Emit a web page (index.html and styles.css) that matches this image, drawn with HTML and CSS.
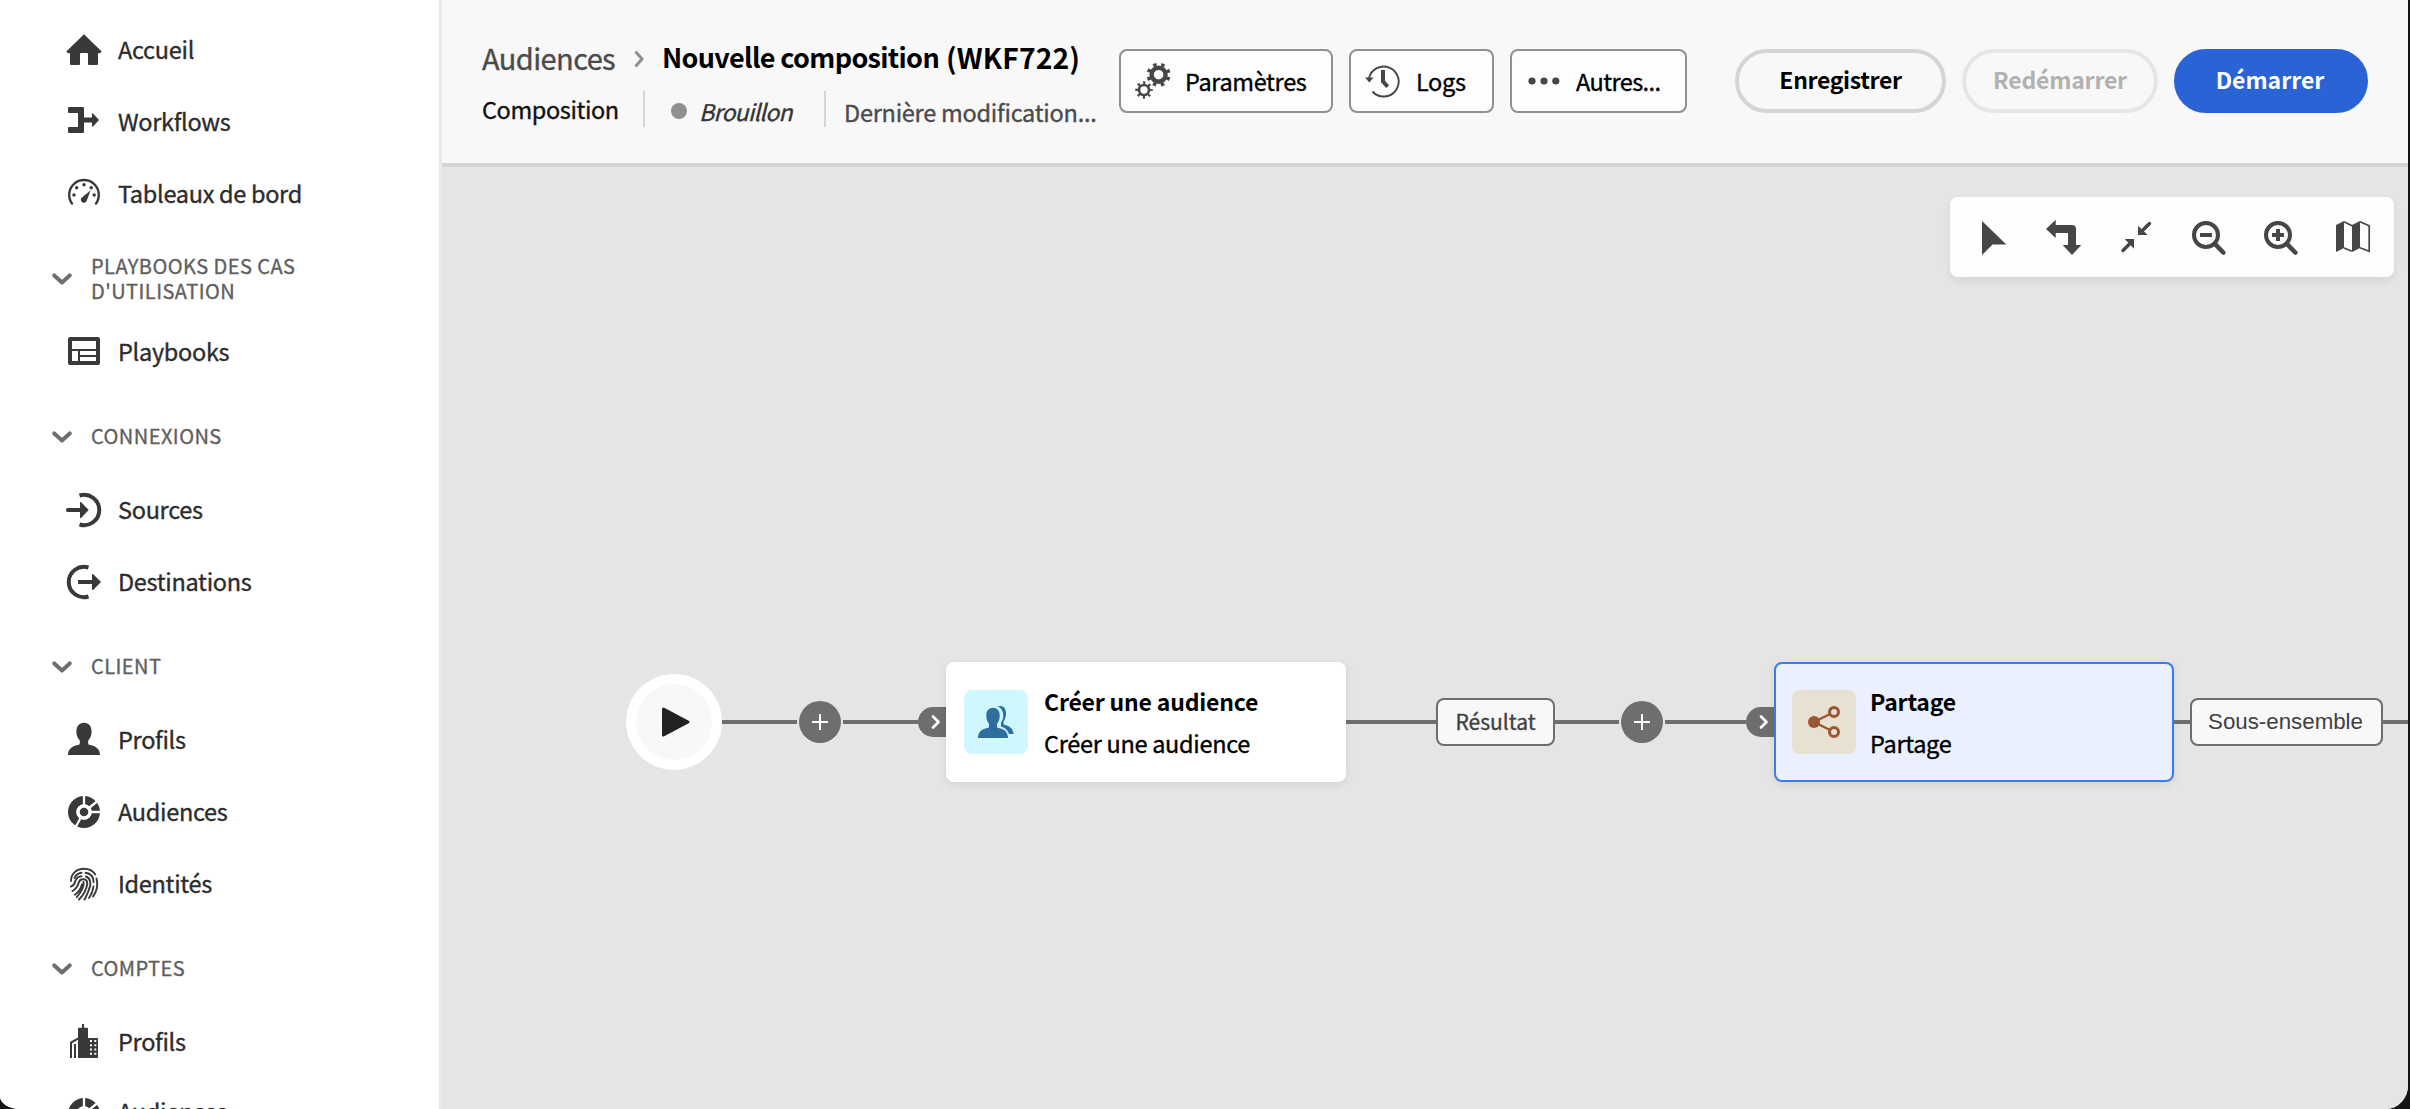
FILE: index.html
```html
<!DOCTYPE html>
<html lang="fr">
<head>
<meta charset="utf-8">
<title>Nouvelle composition</title>
<link rel="stylesheet" href="styles.css">
</head>
<body>
<svg class="defs" aria-hidden="true">
  <symbol id="chevron" viewBox="0 0 20 12"><path d="M2.3 2.4 10 9.4 17.700 2.400" fill="none" stroke="currentColor" stroke-width="4" stroke-linecap="round" stroke-linejoin="round"/></symbol>
  <symbol id="audience" viewBox="0 0 36 36">
    <circle cx="18" cy="18" r="11.900" fill="none" stroke="currentColor" stroke-width="8.200"/>
    <path d="M18 18V0M18 18 34 5M18 18H36M18 18 8.500 35" stroke="#fff" stroke-width="2.300"/>
    <circle cx="18" cy="18" r="7.500" fill="#fff"/>
    <circle cx="18" cy="18" r="4.300" fill="currentColor"/>
  </symbol>
</svg>
<div class="app">
  <nav class="sidebar">
    <a class="item"><svg class="icon" viewBox="0 0 36 36"><path d="M18 2.300 35.700 19.500 34 21.200H32V32q0 1-1 1H23q-1 0-1-1V22q0-1-1-1H15q-1 0-1 1V32q0 1-1 1H5q-1 0-1-1V21.200H2L.3 19.500Z"/></svg><span>Accueil</span></a>
    <a class="item"><svg class="icon" viewBox="0 0 36 36"><path d="M3 3H17q1 0 1 1V13.500H26V10q0-1 1-.5L33 16 27 22.500Q26 23 26 22V18.500H18V28q0 1-1 1H3q-1 0-1-1V24q0-1 1-1H12V9H3Q2 9 2 8V4q0-1 1-1Z"/></svg><span>Workflows</span></a>
    <a class="item"><svg class="icon" viewBox="0 0 36 36"><path d="M6 27.500A14.800 14.800 0 1 1 30 27.500" fill="none" stroke="currentColor" stroke-width="2.400" stroke-linecap="round"/><path d="M24.600 14.200 20.800 24.600A3 3 0 1 1 16 21.500Z"/><circle cx="8" cy="19" r="1.700"/><circle cx="10.700" cy="11.700" r="1.700"/><circle cx="18" cy="8.700" r="1.700"/><circle cx="25.200" cy="11.700" r="1.700"/><circle cx="28.200" cy="19" r="1.700"/></svg><span>Tableaux de bord</span></a>

    <div class="section"><svg class="chev"><use href="#chevron"/></svg><span>PLAYBOOKS DES CAS<br>D'UTILISATION</span></div>
    <a class="item"><svg class="icon" viewBox="0 0 36 36"><g fill="none" stroke="currentColor"><rect x="4" y="5" width="28" height="24" stroke-width="4" stroke-linejoin="round"/><path d="M5 16H31M13 16V28M13 22H31" stroke-width="2"/></g></svg><span>Playbooks</span></a>

    <div class="section"><svg class="chev"><use href="#chevron"/></svg><span>CONNEXIONS</span></div>
    <a class="item"><svg class="icon" viewBox="0 0 36 36"><path d="M13.500 3.500A15.200 15.200 0 1 1 13.500 32.500" fill="none" stroke="currentColor" stroke-width="4"/><path d="M1.500 16H14V10.500q.5-1 1.300-.2L22.700 18l-7.400 7.700Q14.500 26.500 14 25.500V20H1.500Q0 20 0 18t1.500-2Z"/></svg><span>Sources</span></a>
    <a class="item"><svg class="icon" viewBox="0 0 36 36"><path d="M22.500 3.500A15.200 15.200 0 1 0 22.500 32.500" fill="none" stroke="currentColor" stroke-width="4"/><path d="M12 16H26V10.500q.5-1 1.300-.2L35 18l-7.700 7.700Q26.500 26.500 26 25.500V20H12Z"/></svg><span>Destinations</span></a>

    <div class="section"><svg class="chev"><use href="#chevron"/></svg><span>CLIENT</span></div>
    <a class="item"><svg class="icon" viewBox="0 0 36 36"><path d="M18 .8C23 .8 25.600 4.500 25.600 9.500 25.600 13.500 24.200 16.500 22.200 18.500V21.200C22.200 22.300 22.800 22.700 24 23 30.500 24.300 34 27.500 34 33H2C2 27.500 5.500 24.300 12 23 13.200 22.700 13.800 22.300 13.800 21.200V18.500C11.800 16.500 10.400 13.500 10.400 9.500 10.400 4.500 13 .8 18 .8Z"/></svg><span>Profils</span></a>
    <a class="item"><svg class="icon"><use href="#audience"/></svg><span>Audiences</span></a>
    <a class="item"><svg class="icon" viewBox="0 0 36 36"><g fill="none" stroke="currentColor" stroke-width="1.900" stroke-linecap="round"><path d="M5 15C5 7.500 10.500 2.800 18 2.800 23 2.800 27 5 29.300 8.500M30.500 12.500C32 18 31 25 27 30.500"/><path d="M8.500 12C9.500 9.500 12.500 7.300 15.500 6.800M19.500 6.800C24.500 7.500 27.500 11 27.600 16M27.500 20.500C27 25 25.500 28.500 23 32"/><path d="M5 20.500C8 19.500 8.800 17.500 9.300 15 10.300 12.200 13 10.300 15.500 10.200M20 10.500C25 12.500 25.300 18.500 23 23.500 21.800 27 20.500 30 18.500 33.500"/><path d="M6.500 25C11 22.500 12 19.500 12.800 16.500 14 11.800 21.600 12.200 21.300 17.800 20.500 23 18 28.500 13 33.500M8.800 28.800C13 25.800 15 22.500 16 18.500M17.500 16Q18.700 21.500 10.800 31.200"/></g></svg><span>Identités</span></a>

    <div class="section"><svg class="chev"><use href="#chevron"/></svg><span>COMPTES</span></div>
    <a class="item"><svg class="icon" viewBox="0 0 36 36"><path fill-rule="evenodd" d="M16 0H18V3.700H21q1 0 1 1V14H31q1 0 1 1V33q0 1-1 1H12V4.700q0-1 1-1H16ZM24 16V18H26V16ZM28.300 16V18H30.300V16ZM24 20.300V22.300H26V20.300ZM28.300 20.300V22.300H30.300V20.300ZM24 24.500V26.500H26V24.500ZM28.300 24.500V26.500H30.300V24.500ZM24 28.700V30.700H26V28.700ZM28.300 28.700V30.700H30.300V28.700ZM8 20H10V34H8Z"/><path d="M5 34V18.600L12 14.600" fill="none" stroke="currentColor" stroke-width="2"/></svg><span>Profils</span></a>
    <a class="item"><svg class="icon"><use href="#audience"/></svg><span>Audiences</span></a>
  </nav>

  <main class="main">
    <header class="header">
      <div class="titles">
        <div class="crumbs">
          <span class="crumb">Audiences</span>
          <svg class="crumb-sep" viewBox="0 0 12 20"><path d="M2.500 2.500 9 10 2.500 17.500"/></svg>
          <span class="crumb-current">Nouvelle composition</span>
          <span class="crumb-id">(WKF722)</span>
        </div>
        <div class="meta">
          <span class="kind">Composition</span>
          <span class="status"><i class="dot"></i><em>Brouillon</em></span>
          <span class="modified">Dernière modification...</span>
        </div>
      </div>
      <div class="actions">
        <button class="btn"><svg class="icon" viewBox="0 0 36 36"><g fill="none" stroke="currentColor"><circle cx="24.600" cy="11.700" r="7" stroke-width="4.400"/><circle cx="24.600" cy="11.700" r="10.300" stroke-width="3.400" stroke-dasharray="3.400 4.690" stroke-dashoffset="-2.300"/><circle cx="10" cy="27" r="5" stroke-width="2.600"/><circle cx="10" cy="27" r="7.200" stroke-width="3" stroke-dasharray="2.200 3.455" stroke-dashoffset="1.100"/></g></svg><span>Paramètres</span></button>
        <button class="btn"><svg class="icon" viewBox="0 0 36 36"><path d="M4 15.500A15 15 0 1 1 7.500 28.500" fill="none" stroke="currentColor" stroke-width="1.900"/><path d="M0 14.600H8.600L4.300 19.500Z"/><path d="M18 7V18.500L22.600 23.600" fill="none" stroke="currentColor" stroke-width="4"/></svg><span>Logs</span></button>
        <button class="btn"><svg class="icon" viewBox="0 0 36 36"><circle cx="6" cy="18" r="3.600"/><circle cx="18" cy="18" r="3.600"/><circle cx="29.800" cy="18" r="3.600"/></svg><span>Autres...</span></button>
      </div>
      <div class="cta">
        <button class="pill save">Enregistrer</button>
        <button class="pill restart" disabled>Redémarrer</button>
        <button class="pill start">Démarrer</button>
      </div>
    </header>

    <section class="canvas">
      <div class="tools">
        <svg class="icon" viewBox="0 0 36 36"><path d="M7 2 31.300 25.500H17.500L7 36Z"/></svg>
        <svg class="icon" viewBox="0 0 36 36"><path d="M-1 10 8.700.7V6H25q4 0 4 4V26H34.300L25 36 15.700 26H21V14H8.700V19Z"/></svg>
        <svg class="icon" viewBox="0 0 36 36"><path d="M30.500 4.500 22 13M4 31.500 12 23.500" fill="none" stroke="currentColor" stroke-width="3.400" stroke-linecap="round"/><path d="M19 6.700V16H28.700ZM15 29.800V20H5.700Z"/></svg>
        <svg class="icon" viewBox="0 0 36 36"><g fill="none" stroke="currentColor"><circle cx="15" cy="16" r="12" stroke-width="4"/><path d="M9 16H21" stroke-width="4"/><path d="M24 25 32.300 33.500" stroke-width="4.600" stroke-linecap="round"/></g></svg>
        <svg class="icon" viewBox="0 0 36 36"><g fill="none" stroke="currentColor"><circle cx="15" cy="16" r="12" stroke-width="4"/><path d="M9 16H21M15 10V22" stroke-width="4"/><path d="M24 25 32.300 33.500" stroke-width="4.600" stroke-linecap="round"/></g></svg>
        <svg class="icon" viewBox="0 0 36 36"><path d="M1 6 9 2V29L1 33ZM17 6 25 2V29L17 33Z"/><path d="M9 2.700 17 6.700M9 29 17 32.300M25 2.700 34.200 6.700V32.300L25 28.700" fill="none" stroke="currentColor" stroke-width="1.700"/></svg>
      </div>

      <div class="flow">
        <div class="start-node"><div><svg viewBox="0 0 30 32"><path d="M2.500 3 27 16 2.500 29Z"/></svg></div></div>
        <i class="line l1"></i>
        <div class="plus"></div>
        <i class="line l2"></i>
        <div class="port"><svg viewBox="0 0 10 16"><path d="M2 2.500 7.500 8 2 13.500"/></svg></div>
        <div class="card">
          <div class="tile people"><svg class="icon" viewBox="0 0 36 36"><path d="M15 3.700C19 3.700 21.700 6.500 21.700 11.500 21.700 15.500 20.500 18 19 19.700V22.500C19 23.500 19.500 23.800 20.500 24 27 25 30 28.500 30 34H0C0 28.500 3 25 9.500 24 10.500 23.800 11 23.500 11 22.500V19.700C9.500 18 8.300 15.500 8.300 11.500 8.300 6.500 11 3.700 15 3.700Z"/><path d="M19.500 2.500C25 .5 28.300 4.500 28 10 27.800 13.500 27 15.500 25.500 17.500V19.500C25.500 20.300 26 20.600 27 21 32.500 22.300 35.300 25.500 35.500 30H31C29.500 25.500 26.500 23.500 23 22.500V18.500C25 16 25.700 12.500 25 9 24.300 5.500 22.500 3.500 19.500 2.500Z"/></svg></div>
          <div class="card-text"><b>Créer une audience</b><span>Créer une audience</span></div>
        </div>
        <i class="line l3"></i>
        <div class="tag result">Résultat</div>
        <i class="line l4"></i>
        <div class="plus"></div>
        <i class="line l5"></i>
        <div class="port"><svg viewBox="0 0 10 16"><path d="M2 2.500 7.500 8 2 13.500"/></svg></div>
        <div class="card selected">
          <div class="tile share"><svg class="icon" viewBox="0 0 36 36"><path d="M8 18 28 8M8 18 28 28" fill="none" stroke="currentColor" stroke-width="2.200"/><circle cx="8" cy="18" r="6"/><circle cx="28" cy="8" r="4.500" fill="#e8e0d0" stroke="currentColor" stroke-width="3"/><circle cx="28" cy="28" r="4.500" fill="#e8e0d0" stroke="currentColor" stroke-width="3"/></svg></div>
          <div class="card-text"><b>Partage</b><span>Partage</span></div>
        </div>
        <i class="line l6"></i>
        <div class="tag subset">Sous-ensemble</div>
        <i class="line l7"></i>
      </div>
    </section>
  </main>
</div>
</body>
</html>
```
FILE: styles.css
```css
* { box-sizing: border-box; }

body {
  margin: 0;
  background: #161414;
  font-family: "Noto Sans CJK SC", "Open Sans", sans-serif;
  overflow: hidden;
}

.defs { display: none; }

.app {
  display: flex;
  width: 2408px;
  height: 1109px;
  overflow: hidden;
  border-radius: 0 0 22px 20px / 0 0 24px 13px;
  background: #fff;
}

.icon {
  flex: none;
  width: 36px;
  height: 36px;
  fill: currentColor;
  overflow: visible;
}

/* Sidebar */
.sidebar {
  flex: none;
  width: 442px;
  padding-top: 14px;
  border-right: 3px solid #eaeaea;
  background: #fff;
  overflow: hidden;
}

.item {
  display: flex;
  align-items: center;
  gap: 16px;
  height: 72px;
  padding-left: 66px;
  color: #393939;
}

.item span {
  padding-bottom: 3px;
  color: #2c2c2c;
  font-size: 23.5px;
  line-height: 36px;
  letter-spacing: -0.3px;
}

.item:last-child span { padding-bottom: 7px; }

/* Slightly heavier than the regular cut, lighter than medium */
.item span,
.section span,
.crumb,
.meta,
.btn span,
.card-text span,
.result {
  -webkit-text-stroke: 0.35px currentColor;
}

.section {
  display: flex;
  align-items: center;
  gap: 19px;
  height: 86px;
  padding: 12px 0 0 52px;
  color: #6e6e6e;
}

.section span {
  padding-bottom: 1px;
  color: #606060;
  font-size: 20px;
  line-height: 24.4px;
  letter-spacing: 0.45px;
}

.chev { width: 20px; height: 12px; }

/* Main */
.main {
  flex: 1;
  display: flex;
  flex-direction: column;
  min-width: 0;
}

.header {
  flex: none;
  display: flex;
  align-items: flex-start;
  height: 167px;
  border-bottom: 4px solid #d5d5d5;
  background: #f8f8f8;
}

.titles {
  width: 677px;
  padding: 37px 0 0 40px;
  white-space: nowrap;
}

.crumbs {
  display: flex;
  align-items: center;
  height: 40px;
  line-height: 40px;
}

.crumb {
  width: 134px;
  color: #4b4b4b;
  font-size: 29px;
  letter-spacing: -0.6px;
}

.crumb-sep {
  width: 12px;
  height: 20px;
  margin: 3px 17px 0 17px;
  fill: none;
  stroke: #909090;
  stroke-width: 3;
}

.crumb-current {
  width: 284px;
  color: #000;
  font-size: 27px;
  font-weight: 700;
  letter-spacing: -0.65px;
}

.crumb-id {
  color: #000;
  font-size: 28.3px;
  font-weight: 700;
  letter-spacing: 0.1px;
}

.meta {
  display: flex;
  align-items: center;
  height: 36px;
  margin-top: 14px;
  font-size: 23.5px;
  line-height: 36px;
}

.kind {
  width: 161px;
  color: #111;
  letter-spacing: -0.4px;
}

.status {
  display: flex;
  align-items: center;
  width: 181px;
  height: 36px;
  padding-left: 26px;
  border-left: 2px solid #d5d5d5;
  color: #333;
}

.status em {
  padding-top: 3px;
  font-size: 23px;
  letter-spacing: -0.7px;
}

.dot {
  width: 16px;
  height: 16px;
  margin: 3px 12px 0 0;
  border-radius: 50%;
  background: #909090;
}

.modified {
  height: 36px;
  padding-left: 18px;
  border-left: 2px solid #d5d5d5;
  color: #4b4b4b;
  line-height: 42px;
  letter-spacing: -0.25px;
}

.actions {
  display: flex;
  gap: 16px;
  margin-top: 49px;
}

.btn {
  display: flex;
  align-items: center;
  gap: 15px;
  height: 64px;
  padding: 0 26px 0 13px;
  border: 2px solid #909090;
  border-radius: 8px;
  background: #fdfdfd;
  color: #464646;
  font: 400 23.5px/36px "Noto Sans CJK SC", "Open Sans", sans-serif;
  letter-spacing: -0.35px;
}

.btn:nth-child(1) { width: 214px; }
.btn:nth-child(2) { width: 145px; padding-left: 14px; }
.btn:nth-child(3) { width: 177px; padding-left: 14px; gap: 14px; }
.btn span { color: #000; white-space: nowrap; }
.btn:nth-child(3) span { letter-spacing: -0.6px; }

.cta {
  display: flex;
  gap: 16px;
  margin: 49px 0 0 48px;
}

.pill {
  height: 64px;
  padding: 0 0 4px;
  border: 4px solid #d5d5d5;
  border-radius: 32px;
  background: transparent;
  color: #000;
  font: 700 23px/36px "Noto Sans CJK SC", "Open Sans", sans-serif;
}

.save { width: 211px; letter-spacing: -0.35px; }
.restart { width: 196px; border-color: #e6e6e6; color: #b1b1b1; letter-spacing: -0.2px; }
.start { width: 194px; padding-right: 2px; border-color: #2963d5; background: #2963d5; color: #fff; }

/* Canvas */
.canvas {
  position: relative;
  flex: 1;
  background: #e5e5e5;
}

.tools {
  position: absolute;
  top: 30px;
  right: 14px;
  display: flex;
  gap: 36px;
  width: 444px;
  height: 80px;
  padding: 22px 0 0 25px;
  border-radius: 8px;
  background: #fdfdfd;
  box-shadow: 0 4px 8px rgba(0, 0, 0, 0.07);
  color: #464646;
}

.flow {
  position: absolute;
  top: 495px;
  left: 184px;
  display: flex;
  align-items: center;
  height: 120px;
}

.flow > * { flex: none; }

.line { height: 4px; background: #6e6e6e; }
.l1 { width: 75px; }
.l2 { width: 75px; }
.l3 { width: 90px; }
.l4 { width: 64px; }
.l5 { width: 81px; }
.l6 { width: 16px; }
.l7 { width: 25px; }

.start-node {
  display: grid;
  place-items: center;
  width: 96px;
  height: 96px;
  border-radius: 50%;
  background: #fff;
}

.start-node div {
  width: 76px;
  height: 76px;
  padding: 22px 0 0 25px;
  border-radius: 50%;
  background: #f8f8f8;
}

.start-node svg {
  width: 30px;
  height: 32px;
  fill: #222;
  stroke: #222;
  stroke-width: 3;
  stroke-linejoin: round;
}

.plus {
  width: 42px;
  height: 42px;
  margin: 0 2px;
  border-radius: 50%;
  background:
    linear-gradient(#fff, #fff) center / 16px 2px no-repeat,
    linear-gradient(#fff, #fff) center / 2px 16px no-repeat,
    #6e6e6e;
}

.port {
  display: flex;
  align-items: center;
  width: 28px;
  height: 30px;
  padding-left: 13px;
  border-radius: 15px 0 0 15px;
  background: #6e6e6e;
}

.port svg {
  width: 10px;
  height: 16px;
  fill: none;
  stroke: #fff;
  stroke-width: 2.6;
  stroke-linecap: round;
  stroke-linejoin: round;
}

.card {
  display: flex;
  align-items: center;
  gap: 16px;
  width: 400px;
  height: 120px;
  padding-left: 18px;
  border-radius: 8px;
  background: #fff;
  box-shadow: 0 2px 8px rgba(0, 0, 0, 0.09);
}

.selected {
  padding-left: 16px;
  gap: 14px;
  border: 2px solid #3a7bef;
  background: #eaf0fd;
}

.tile {
  display: grid;
  place-items: center;
  width: 64px;
  height: 64px;
  border-radius: 8px;
}

.people { background: #cff7ff; color: #2e6e9e; }
.share { background: #e8e0d0; color: #9c5533; }

.card-text {
  display: flex;
  flex-direction: column;
  color: #000;
  line-height: 42px;
}

.card-text b { font-size: 23px; letter-spacing: -0.2px; }
.card-text span { font-size: 23.5px; letter-spacing: -0.3px; }

.tag {
  height: 48px;
  padding-bottom: 2px;
  border: 2px solid #6e6e6e;
  border-radius: 8px;
  background: #f8f8f8;
  color: #404040;
  font-size: 21px;
  line-height: 42px;
  text-align: center;
}

.result { width: 119px; }

.subset {
  width: 193px;
  padding: 0 2px 0 0;
  font-family: "Liberation Sans", Arial, sans-serif;
  font-size: 22.3px;
  line-height: 44px;
}
```
